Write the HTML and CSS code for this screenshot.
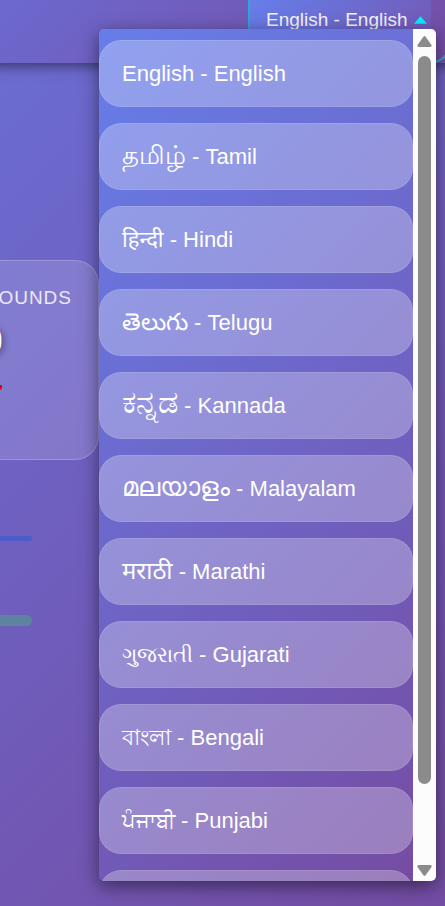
FILE: index.html
```html
<!DOCTYPE html>
<html lang="en">
<head>
<meta charset="utf-8">
<meta name="viewport" content="width=device-width, initial-scale=1">
<title>Rounds</title>
<link rel="stylesheet" href="styles.css">
</head>
<body>
<header class="topbar">
  <div class="picker">
    <button class="picker-toggle" type="button" aria-haspopup="listbox" aria-expanded="true">
      English - English
      <svg class="caret" viewBox="0 0 14 8" aria-hidden="true"><path d="M7 0 14 8H0Z"/></svg>
    </button>
  </div>
</header>
<main class="content">
  <section class="card">
    <h2 class="card-label">ROUNDS</h2>
    <p class="card-value">0</p>
    <span class="card-mark"></span>
  </section>
  <div class="line"></div>
  <div class="bar"></div>
</main>
<div class="menu">
  <div class="options" role="listbox" aria-label="Language">
    <button class="option" type="button" role="option">English - English</button>
    <button class="option" type="button" role="option"><span class="native wide" lang="ta">தமிழ்</span> - Tamil</button>
    <button class="option" type="button" role="option"><span class="native" lang="hi">हिन्दी</span> - Hindi</button>
    <button class="option" type="button" role="option"><span class="native medium" lang="te">తెలుగు</span> - Telugu</button>
    <button class="option" type="button" role="option"><span class="native extra" lang="kn">ಕನ್ನಡ</span> - Kannada</button>
    <button class="option" type="button" role="option"><span class="native wide" lang="ml">മലയാളം</span> - Malayalam</button>
    <button class="option" type="button" role="option"><span class="native medium" lang="mr">मराठी</span> - Marathi</button>
    <button class="option" type="button" role="option"><span class="native small" lang="gu">ગુજરાતી</span> - Gujarati</button>
    <button class="option" type="button" role="option"><span class="native" lang="bn">বাংলা</span> - Bengali</button>
    <button class="option" type="button" role="option"><span class="native small" lang="pa">ਪੰਜਾਬੀ</span> - Punjabi</button>
    <button class="option" type="button" role="option" aria-label="More"></button>
  </div>
  <div class="scrollbar" aria-hidden="true">
    <svg class="arrow" viewBox="0 0 15 11"><path d="M6.4 .7Q7.5-.6 8.6.7L14.5 9Q15.2 11 13 11H2Q-.2 11 .5 9Z"/></svg>
    <div class="thumb"></div>
    <svg class="arrow" viewBox="0 0 15 11"><path d="M6.4 10.3Q7.5 11.6 8.6 10.3L14.5 2Q15.2 0 13 0H2Q-.2 0 .5 2Z"/></svg>
  </div>
</div>
</body>
</html>
```
FILE: styles.css
```css
* {
  box-sizing: border-box;
}

body {
  position: relative;
  margin: 0;
  min-height: 100vh;
  overflow: hidden;
  color: #fff;
  font-family: "Liberation Sans", "Noto Sans", sans-serif;
  background: linear-gradient(135deg, #6b6dd3, #744ca3);
}

.topbar {
  position: relative;
  display: flex;
  justify-content: flex-end;
  height: 63px;
  margin: 0 -16px;
  padding-right: 16px;
  background: linear-gradient(135deg, #6c6ad0, #754ca3);
  box-shadow: 0 3px 12px rgba(0, 0, 0, 0.5);
}

.picker {
  flex: none;
  width: 202px;
  margin-right: -5px;
  border: 2px solid #2fa5d6;
  border-top: 0;
  border-radius: 0 0 18px 18px;
  overflow: hidden;
}

.picker-toggle {
  display: flex;
  align-items: center;
  gap: 6px;
  width: 181px;
  height: 40px;
  padding: 0 0 0 16px;
  border: 0;
  color: #f4f2fc;
  font: 19px "Liberation Sans", sans-serif;
  white-space: nowrap;
  background: linear-gradient(135deg, #667eea, #7358b4);
}

.caret {
  flex: none;
  width: 13px;
  height: 8px;
  fill: #00f0ff;
}

.content {
  padding-top: 197px;
}

.card {
  width: 210px;
  height: 200px;
  margin-left: -111px;
  padding: 26px;
  border: 1px solid rgba(255, 255, 255, 0.2);
  border-radius: 24px;
  background: rgba(255, 255, 255, 0.15);
  text-align: right;
}

.card-label {
  margin: 0;
  color: #ece8f8;
  font-size: 19px;
  font-weight: 400;
  line-height: 22px;
  letter-spacing: 1px;
}

.card-value {
  margin: 12px 69px 0 0;
  font-size: 38px;
  font-weight: 700;
  line-height: 40px;
  text-shadow: 2px 2px 6px rgba(0, 0, 0, 0.4);
}

.card-mark {
  display: block;
  width: 4px;
  height: 5px;
  margin: 24px 70px 0 auto;
  background: #d90018;
  border-radius: 0 0 3px 0;
}

.line {
  width: 32px;
  height: 5px;
  margin-top: 76px;
  border-radius: 0 2px 2px 0;
  background: #4c5ccb;
}

.bar {
  width: 32px;
  height: 11px;
  margin-top: 74px;
  border-radius: 0 6px 6px 0;
  background: #5d839f;
}

.menu {
  position: absolute;
  top: 29px;
  right: 9px;
  bottom: 25px;
  left: 99px;
  display: flex;
  overflow: hidden;
  border-radius: 5px;
  background: linear-gradient(135deg, #667eea, #764ba2);
  box-shadow: 0 5px 18px rgba(0, 0, 0, 0.5);
}

.options {
  flex: 1;
  display: flex;
  flex-direction: column;
  gap: 16px;
  padding-top: 11px;
  overflow: hidden;
}

.option {
  flex: none;
  height: 67px;
  padding: 0 22px;
  border: 1px solid rgba(255, 255, 255, 0.1);
  border-radius: 22px;
  color: #fff;
  font: 22px/24px "Liberation Sans", "Noto Sans", sans-serif;
  text-align: left;
  white-space: nowrap;
  background: rgba(255, 255, 255, 0.28);
}

.native {
  line-height: 0;
}

.small {
  font-size: 21px;
}

.medium {
  font-size: 24px;
}

.wide {
  font-size: 26px;
}

.extra {
  font-size: 32px;
}

.scrollbar {
  display: flex;
  flex-direction: column;
  align-items: center;
  width: 23px;
  padding: 7px 0 5px;
  background: #fcfcfc;
}

.arrow {
  flex: none;
  width: 15px;
  height: 11px;
  fill: #8b8b8b;
}

.thumb {
  flex: 1;
  width: 13px;
  margin: 9px 0 81px;
  border-radius: 7px;
  background: #8b8b8b;
}
```
